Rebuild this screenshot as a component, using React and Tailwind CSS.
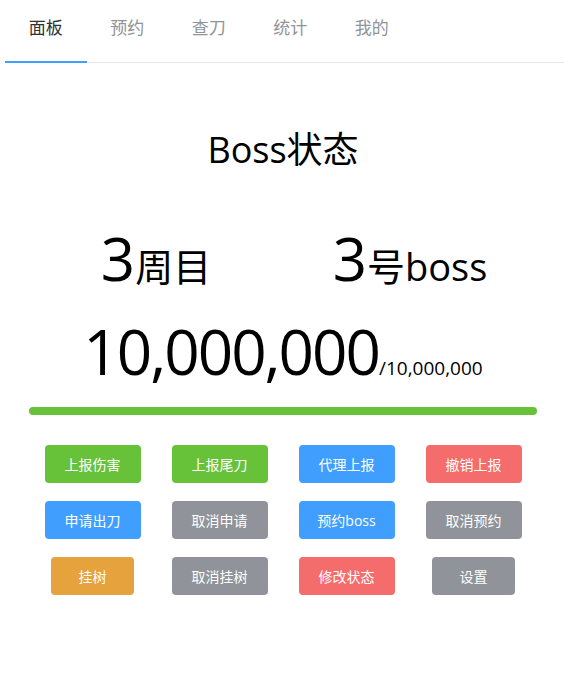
import React from "react";

const tabs = ["面板", "预约", "查刀", "统计", "我的"];

const btn = {
  green: "bg-[#67c23a]",
  blue: "bg-[#409eff]",
  red: "bg-[#f56c6c]",
  gray: "bg-[#909399]",
  orange: "bg-[#e6a23c]",
};

const rows = [
  [["上报伤害", "green", "w-[96px]"], ["上报尾刀", "green", "w-[96px]"], ["代理上报", "blue", "w-[96px]"], ["撤销上报", "red", "w-[96px]"]],
  [["申请出刀", "blue", "w-[96px]"], ["取消申请", "gray", "w-[96px]"], ["预约boss", "blue", "w-[96px]"], ["取消预约", "gray", "w-[96px]"]],
  [["挂树", "orange", "w-[83px]"], ["取消挂树", "gray", "w-[96px]"], ["修改状态", "red", "w-[96px]"], ["设置", "gray", "w-[83px]"]],
];

export default function App() {
  return (
    <div className="w-[569px] h-[680px] bg-white font-['Open_Sans','Noto_Sans_CJK_SC',sans-serif] text-black">
      <div className="px-[5px]">
        <div className="flex h-[63px] border-b border-[#e4e7ed]">
          {tabs.map((t, i) => (
            <div
              key={t}
              className={`w-[81.5px] flex justify-center pt-[16px] text-[17px] leading-[24px] ${
                i === 0 ? "text-[#303133] border-b-2 border-[#409eff] -mb-px" : "text-[#909399]"
              }`}
            >
              {t}
            </div>
          ))}
        </div>
      </div>
      <div className="pl-[29px] pr-[32px]">
        <div className="mt-[63px] text-center text-[36px] leading-[48px]">Boss状态</div>
        <div className="mt-[48px] flex">
          <div className="flex-1 flex justify-center items-baseline">
            <span className="text-[60px] leading-[72px]">3</span>
            <span className="text-[38px]">周目</span>
          </div>
          <div className="flex-1 flex justify-center items-baseline">
            <span className="text-[60px] leading-[72px]">3</span>
            <span className="text-[38px]">号boss</span>
          </div>
        </div>
        <div className="mt-[18px] flex justify-center items-baseline">
          <span className="text-[62px] leading-[76px] tracking-[-2px]">10,000,000</span>
          <span className="text-[19px]">/10,000,000</span>
        </div>
        <div className="mt-[18px] h-[8px] rounded-full bg-[#67c23a]" />
        <div className="mt-[30px] flex flex-col gap-[18px]">
          {rows.map((r, ri) => (
            <div key={ri} className="grid grid-cols-4">
              {r.map(([label, c, w]) => (
                <div key={label} className="flex justify-center">
                  <div className={`${btn[c]} ${w} h-[38px] rounded-[4px] text-white text-[14px] flex items-center justify-center`}>
                    {label}
                  </div>
                </div>
              ))}
            </div>
          ))}
        </div>
      </div>
    </div>
  );
}
